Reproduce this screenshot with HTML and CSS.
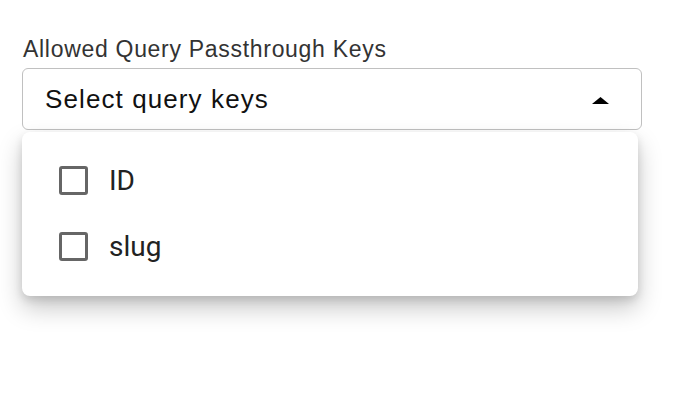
FILE: index.html
```html
<!DOCTYPE html>
<html>
<head>
<meta charset="utf-8">
<link rel="stylesheet" href="styles.css">
</head>
<body>
<div class="field">
  <div class="label">Allowed Query Passthrough Keys</div>
  <div class="select">
    <span class="placeholder">Select query keys</span>
    <svg class="caret" width="17" height="7" viewBox="0 0 17 7"><polygon points="0,7 8.5,0 17,7" fill="#000"/></svg>
  </div>
  <div class="menu">
    <label class="option"><span class="box"></span><span class="text">ID</span></label>
    <label class="option"><span class="box"></span><span class="text">slug</span></label>
  </div>
</div>
</body>
</html>
```
FILE: styles.css
```css
html, body { margin: 0; padding: 0; background: #fff; }
body { font-family: "Liberation Sans", Arial, sans-serif; min-height: 410px; }
.field { padding: 35px 0 60px 22px; width: 620px; display: flex; flex-direction: column; }
.label { font-size: 23px; letter-spacing: 0.7px; color: #333; line-height: 28px; padding-left: 1px; margin-bottom: 5px; }
.select {
  height: 62px; box-sizing: border-box; border: 1.5px solid #c0c0c0; border-radius: 6px;
  display: flex; align-items: center; justify-content: space-between;
  padding: 0 32px 0 22px;
}
.placeholder { font-size: 26px; letter-spacing: 1.1px; color: #111; }
.caret { display: block; margin-top: 2px; }
.menu {
  margin-top: 2px; width: 616px; height: 164px; box-sizing: border-box;
  background: #fff; border-radius: 8px;
  box-shadow: 0 12px 24px rgba(0,0,0,0.22), 0 4px 8px rgba(0,0,0,0.12);
  display: flex; flex-direction: column; padding: 34px 0 0 37px; gap: 37px;
}
.option { display: flex; align-items: center; height: 29px; gap: 21px; }
.box { width: 29px; height: 29px; box-sizing: border-box; border: 3px solid #666; border-radius: 3px; }
.text { font-family: Roboto, "Liberation Sans", sans-serif; font-size: 28px; color: #222; }
```
